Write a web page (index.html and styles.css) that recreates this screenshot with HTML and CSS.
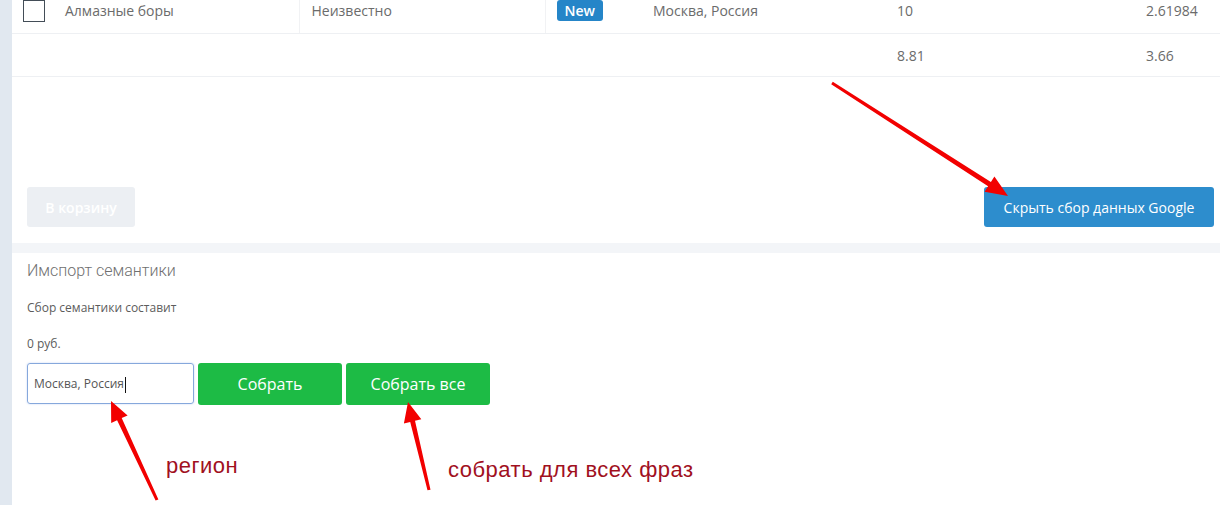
FILE: index.html
```html
<!DOCTYPE html>
<html lang="ru">
<head>
  <meta charset="UTF-8">
  <meta name="viewport" content="width=device-width, initial-scale=1.0">
  <title>Сбор семантики</title>
  <link rel="stylesheet" href="styles.css">
</head>
<body>
  <div class="page">
    <aside class="sidebar"></aside>

    <main class="main">
      <section class="card results">
        <table class="phrases">
          <colgroup>
            <col class="c-check">
            <col class="c-name">
            <col class="c-source">
            <col class="c-badge">
            <col class="c-region">
            <col class="c-freq">
            <col class="c-cost">
          </colgroup>
          <tbody>
            <tr class="first">
              <td class="check"><span class="checkbox"></span></td>
              <td>Алмазные боры</td>
              <td class="sep">Неизвестно</td>
              <td class="badge-cell sep"><span class="badge">New</span></td>
              <td>Москва, Россия</td>
              <td>10</td>
              <td>2.61984</td>
            </tr>
            <tr>
              <td></td>
              <td></td>
              <td></td>
              <td></td>
              <td></td>
              <td>8.81</td>
              <td>3.66</td>
            </tr>
          </tbody>
        </table>

        <div class="actions">
          <button class="btn btn-muted">В корзину</button>
          <button class="btn btn-blue">Скрыть сбор данных Google</button>
        </div>
      </section>

      <section class="card import">
        <h3>Имспорт семантики</h3>
        <p class="cost">Сбор семантики составит</p>
        <p class="price">0 руб.</p>
        <div class="collect">
          <div class="region-input">Москва, Россия<span class="caret"></span></div>
          <button class="btn btn-green">Собрать</button>
          <button class="btn btn-green">Собрать все</button>
        </div>
      </section>
    </main>

    <!-- annotations drawn over the screenshot -->
    <svg class="notes" width="1220" height="505" viewBox="0 0 1220 505">
      <polygon points="832.8,81.7 990.9,182 994.4,176.5 1008,196 984.6,191.7 988.1,186.2 831.2,84.3"/>
      <polygon points="158.4,499.4 121.7,418.1 127.6,415.4 111,401 111.2,423 117.1,420.3 155.6,500.6"/>
      <polygon points="430.5,489.7 415,420.8 421.3,419.3 408,402 403.9,423.5 410.2,422 427.5,490.3"/>
      <text x="166" y="473">регион</text>
      <text x="448" y="477">собрать для всех фраз</text>
    </svg>
  </div>
</body>
</html>
```

FILE: styles.css
```css
html, body {
  height: 100%;
}
body {
  margin: 0;
  font-family: "Open Sans", "Liberation Sans", sans-serif;
  color: #6b6b6b;
  overflow: hidden;
}
.page {
  position: relative;
  display: flex;
  height: 100%;
}
.sidebar {
  width: 12px;
  background-color: #e1e8f0;
}
.main {
  flex: 1;
  display: flex;
  flex-direction: column;
  gap: 10px;
  background-color: #f3f5f8;
}
.card {
  background-color: #fff;
}

/* table */
.phrases {
  width: 100%;
  table-layout: fixed;
  border-collapse: collapse;
  margin-top: -12px;
  font-size: 14px;
}
.c-check { width: 41px; }
.c-name { width: 246px; }
.c-source { width: 246px; }
.c-badge { width: 96px; }
.c-region { width: 244px; }
.c-freq { width: 249px; }
.c-cost { width: 86px; }
.phrases td {
  height: 42px;
  padding: 0 12px;
  border-bottom: 1px solid #eef0f3;
  white-space: nowrap;
  vertical-align: middle;
}
.phrases .first td {
  height: 45px;
}
.phrases .first .sep {
  border-left: 1px solid #f1f2f4;
}
.phrases td.check,
.phrases td.badge-cell {
  padding-left: 11px;
}
.checkbox {
  display: inline-block;
  width: 20px;
  height: 20px;
  border: 1px solid #434d57;
  vertical-align: middle;
}
.badge {
  display: inline-block;
  height: 21px;
  line-height: 21px;
  padding: 0 8px;
  border-radius: 3px;
  background-color: #2585c8;
  color: #fff;
  font-weight: 600;
  vertical-align: middle;
}

/* buttons */
.actions {
  display: flex;
  justify-content: space-between;
  margin-top: 110px;
  padding: 0 6px 16px 15px;
}
.btn {
  height: 40px;
  padding: 0 20px;
  border: none;
  border-radius: 3px;
  font-family: "Open Sans", "Liberation Sans", sans-serif;
  font-size: 14px;
  color: #fff;
  cursor: pointer;
}
.btn-muted {
  width: 108px;
  padding: 0;
  background-color: #eceff3;
  font-weight: 600;
}
.btn-blue {
  width: 230px;
  padding: 0;
  background-color: #2d8dcd;
}
.btn-green {
  width: 144px;
  height: 42px;
  background-color: #1dbb45;
  font-size: 16px;
}

/* import */
.import {
  flex: 1;
  padding: 8px 15px;
}
.import h3 {
  margin: 0 0 18px;
  font-family: Roboto, "Liberation Sans", sans-serif;
  font-weight: 300;
  font-size: 16px;
  line-height: 20px;
  color: #6f6f6f;
}
.import p {
  margin: 0;
  font-size: 12px;
  line-height: 17px;
  color: #5c5c5c;
}
.import .cost {
  margin-bottom: 19px;
}
.collect {
  display: flex;
  align-items: flex-start;
  gap: 4px;
  margin-top: 11px;
}
.region-input {
  box-sizing: border-box;
  width: 167px;
  height: 41px;
  padding: 0 6px;
  border: 1px solid #86a8dc;
  border-radius: 3px;
  box-shadow: 0 0 2px rgba(80, 130, 220, 0.35);
  font-size: 12px;
  line-height: 39px;
  color: #555;
}
.caret {
  display: inline-block;
  width: 1px;
  height: 16px;
  background-color: #111;
  vertical-align: middle;
  margin-left: 1px;
}

/* annotations */
.notes {
  position: absolute;
  top: 0;
  left: 0;
  pointer-events: none;
}
.notes polygon {
  fill: #f20000;
}
.notes text {
  font-family: "Liberation Sans", Arial, sans-serif;
  font-size: 22px;
  letter-spacing: 0.5px;
  fill: #a1101e;
}
```
